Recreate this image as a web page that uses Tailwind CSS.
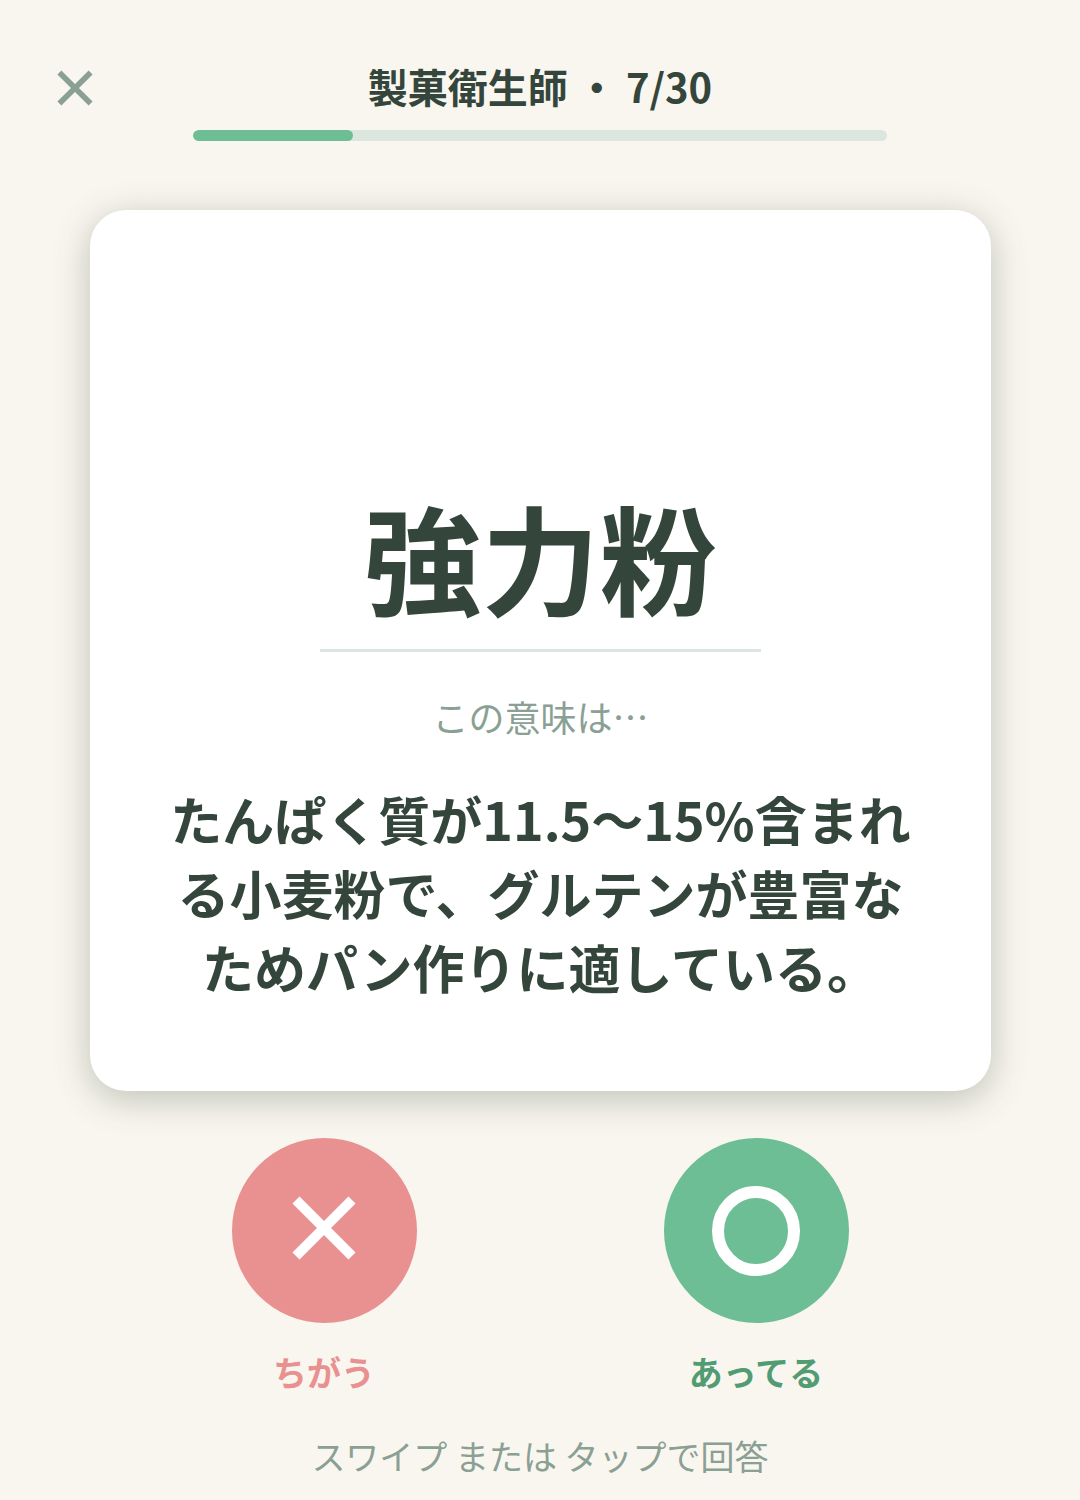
<!DOCTYPE html>
<html lang="ja">
<head>
  <meta charset="UTF-8" />
  <meta name="viewport" content="width=device-width, initial-scale=1" />
  <title>製菓衛生師</title>
  <script src="https://cdn.jsdelivr.net/npm/@tailwindcss/browser@4"></script>
</head>
<body class="min-h-screen bg-[#f9f6ef] font-['Noto_Sans_CJK_JP',sans-serif] text-[#34463c]">
  <div class="flex min-h-screen flex-col">
    <header class="grid grid-cols-[auto_1fr_auto] px-[52px] pt-[60px]">
      <button type="button" aria-label="閉じる" class="flex h-14 w-[46px] items-center justify-center text-[#8ba094]">
        <svg class="h-9 w-9" viewBox="0 0 36 36" fill="none" stroke="currentColor" stroke-width="5.6"><path d="M2.4 2.4L33.6 33.6M33.6 2.4L2.4 33.6" /></svg>
      </button>
      <h1 class="text-center text-[40px] leading-[52px] font-bold">製菓衛生師 ・ 7/30</h1>
      <div class="w-[46px]"></div>
    </header>
    <div class="mx-auto mt-[14px] h-[11px] w-[64.2%] overflow-hidden rounded-full bg-[#dbe7de]">
      <div class="h-full rounded-full bg-[#6dbe94]" style="width: 23.1%"></div>
    </div>

    <main class="mr-[89px] ml-[90px] mt-[69px] flex flex-col items-center rounded-[36px] bg-white px-[60px] pt-[266px] pb-[87px] text-center shadow-[0_8px_36px_rgba(53,72,52,0.3)]">
      <h2 class="text-[118px] leading-[160px] font-bold">強力粉</h2>
      <hr class="mt-[13px] w-[441px] border-t-[3px] border-[#dbe7de]" />
      <p class="mt-[38px] text-[36px] leading-[52px] text-[#8ba094]">この意味は…</p>
      <p class="mt-10 text-[52px] leading-[74px] font-bold">たんぱく質が11.5〜15%含まれ<br />る小麦粉で、グルテンが豊富な<br />ためパン作りに適している。</p>
    </main>

    <div class="mx-[108px] mt-[47px] grid grid-cols-2">
      <div class="flex flex-col items-center">
        <button type="button" aria-labelledby="wrong" class="flex h-[185px] w-[185px] items-center justify-center rounded-full bg-[#e89190] pb-1.5 text-white">
          <svg class="h-16 w-16" viewBox="0 0 64 64" fill="none" stroke="currentColor" stroke-width="10"><path d="M4 4L60 60M60 4L4 60" /></svg>
        </button>
        <span id="wrong" class="mt-6 text-[34px] leading-[50px] font-bold text-[#e89190]">ちがう</span>
      </div>
      <div class="flex flex-col items-center">
        <button type="button" aria-labelledby="right" class="flex h-[185px] w-[185px] items-center justify-center rounded-full bg-[#6dbe94] text-white">
          <svg class="h-[90px] w-[90px]" viewBox="0 0 90 90" fill="none" stroke="currentColor" stroke-width="12"><ellipse cx="45" cy="45" rx="38" ry="39" /></svg>
        </button>
        <span id="right" class="mt-6 text-[34px] leading-[50px] font-bold text-[#529c73]">あってる</span>
      </div>
    </div>
    <p class="mt-[34px] text-center text-[34px] leading-[50px] text-[#8ba094]">スワイプ または タップで回答</p>
  </div>
</body>
</html>
